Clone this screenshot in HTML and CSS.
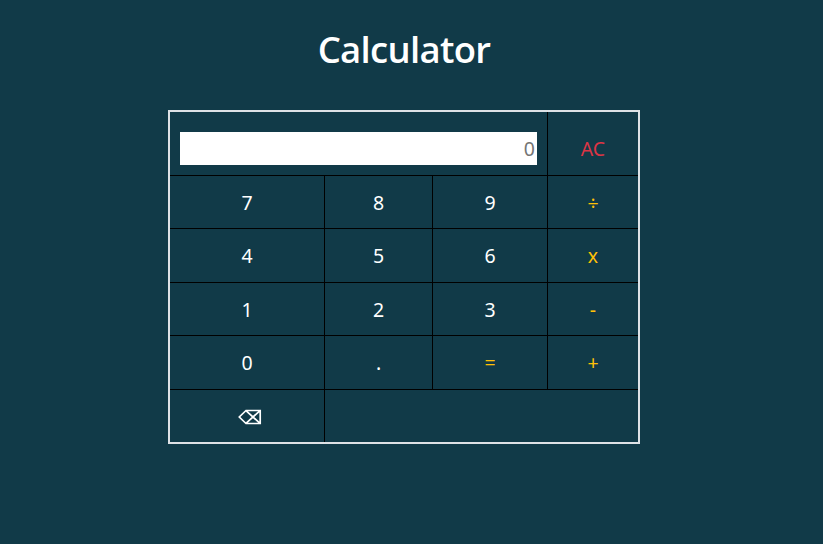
FILE: index.html
```html
<!DOCTYPE html>
<html lang="en">
<head>
<meta charset="utf-8">
<title>Calculator</title>
<link rel="stylesheet" href="styles.css">
</head>
<body>
<main class="app">
  <h1 class="title">Calculator</h1>
  <div class="calculator">
    <div class="cell display"><input class="screen" type="text" placeholder="0" aria-label="Result"></div>
    <button class="cell clear">AC</button>
    <button class="cell">7</button>
    <button class="cell">8</button>
    <button class="cell">9</button>
    <button class="cell operator">÷</button>
    <button class="cell">4</button>
    <button class="cell">5</button>
    <button class="cell">6</button>
    <button class="cell operator">x</button>
    <button class="cell">1</button>
    <button class="cell">2</button>
    <button class="cell">3</button>
    <button class="cell operator">-</button>
    <button class="cell">0</button>
    <button class="cell">.</button>
    <button class="cell operator">=</button>
    <button class="cell operator">+</button>
    <button class="cell backspace" aria-label="Backspace">
      <svg class="icon" viewBox="0 0 24 16" width="24" height="16" fill="none" stroke="currentColor" stroke-width="1.7"><path d="M8 1.5H22.2V14.5H8L1.3 8ZM8.2 1.8L21.8 14.2M21.8 1.8L8.2 14.2"/></svg>
    </button>
    <div class="cell blank"></div>
  </div>
</main>
</body>
</html>
```
FILE: styles.css
```css
* {
  box-sizing: border-box;
}

body {
  margin: 0;
  min-height: 100vh;
  background: #113a48;
  color: #fff;
  font-family: "Open Sans", "Noto Sans", sans-serif;
}

.app {
  display: flex;
  flex-direction: column;
  align-items: center;
  padding: 25px 15px 0 0;
}

.title {
  margin: 0 0 37px;
  font-size: 36.5px;
  font-weight: 600;
  line-height: 48px;
  letter-spacing: -0.7px;
}

.calculator {
  display: grid;
  grid-template-columns: 154px 107px 114px 90px;
  grid-template-rows: 63px 52px 53px 52px 53px 52px;
  gap: 1px;
  border: 2px solid #dee2e6;
  background: #000;
}

.cell {
  display: flex;
  align-items: center;
  justify-content: center;
  margin: 0;
  padding: 1px 0 0;
  border: 0;
  background: #113a48;
  color: #fff;
  font: 400 19.5px/28px "Noto Sans", "Open Sans", sans-serif;
}

.display {
  grid-column: span 3;
  padding: 10px 10px 0;
}

.screen {
  width: 100%;
  height: 33px;
  padding: 1px 2px;
  border: 0;
  border-radius: 0;
  background: #fff;
  color: #212529;
  font: inherit;
  text-align: right;
}

.screen::placeholder {
  color: #757575;
  opacity: 1;
}

.clear {
  padding-top: 11px;
  color: #dc3545;
}

.operator {
  color: #ffc107;
}

.backspace {
  padding: 2px 0 0 5px;
}

.blank {
  grid-column: span 3;
}
```
